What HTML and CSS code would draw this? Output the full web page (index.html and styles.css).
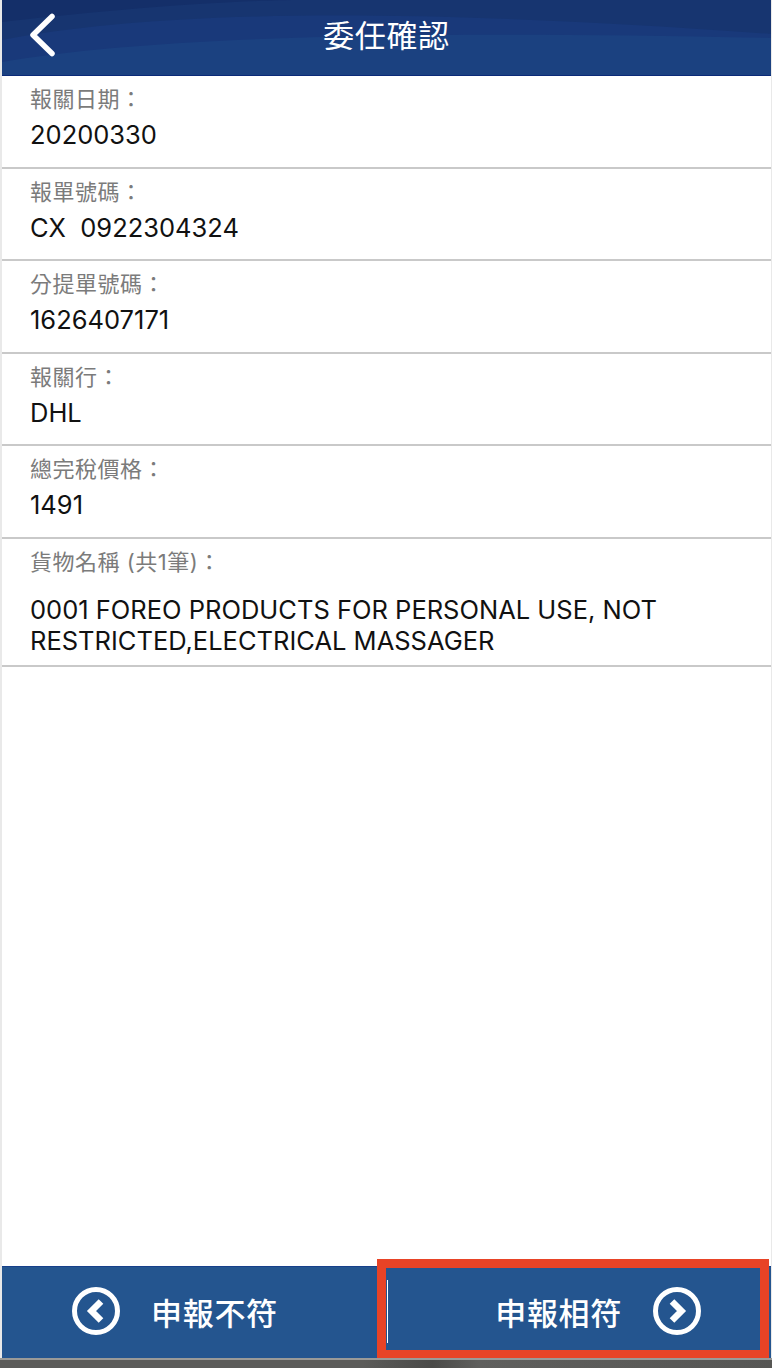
FILE: index.html
```html
<!DOCTYPE html>
<html lang="zh-Hant">
<head>
    <meta charset="UTF-8">
    <meta name="viewport" content="width=device-width, initial-scale=1.0">
    <title>委任確認</title>
    <link rel="stylesheet" href="styles.css">
</head>
<body>
    <div class="screen">
        <header class="topbar">
            <svg class="topbar-bg" viewBox="0 0 770 75" preserveAspectRatio="none" aria-hidden="true">
                <path d="M0 0H770V75H0Z" fill="#1b4180"/>
                <path d="M0 62C150 36 420 30 770 38V0H0Z" fill="#19397a"/>
                <path d="M0 40C140 14 360 4 770 34V0H0Z" fill="#173570"/>
                <path d="M0 22C120 8 240 0 300 0H0Z" fill="#142f69"/>
            </svg>
            <a class="back" href="#">
                <svg width="30" height="46" viewBox="0 0 30 46" aria-hidden="true">
                    <path d="M27 4.500L8 23L27 41.500" fill="none" stroke="#fff" stroke-width="5.500" stroke-linecap="round" stroke-linejoin="round"/>
                </svg>
            </a>
            <h1 class="title">委任確認</h1>
        </header>

        <main class="list">
            <section class="row">
                <div class="label">報關日期：</div>
                <div class="value">20200330</div>
            </section>
            <section class="row">
                <div class="label">報單號碼：</div>
                <div class="value">CX&nbsp;&nbsp;0922304324</div>
            </section>
            <section class="row">
                <div class="label">分提單號碼：</div>
                <div class="value">1626407171</div>
            </section>
            <section class="row">
                <div class="label">報關行：</div>
                <div class="value">DHL</div>
            </section>
            <section class="row">
                <div class="label">總完稅價格：</div>
                <div class="value">1491</div>
            </section>
            <section class="row row-goods">
                <div class="label">貨物名稱 (共1筆)：</div>
                <div class="value">0001 FOREO PRODUCTS FOR PERSONAL USE, NOT RESTRICTED,ELECTRICAL MASSAGER</div>
            </section>
        </main>

        <footer class="actions">
            <a class="action" href="#">
                <svg class="action-icon" viewBox="0 0 48 48" aria-hidden="true">
                    <circle cx="24" cy="24" r="21.500" fill="none" stroke="#fff" stroke-width="5"/>
                    <path d="M29 14.500L19.500 24L29 33.500" fill="none" stroke="#fff" stroke-width="6.500"/>
                </svg>
                <span>申報不符</span>
            </a>
            <a class="action action-next" href="#">
                <span>申報相符</span>
                <svg class="action-icon" viewBox="0 0 48 48" aria-hidden="true">
                    <circle cx="24" cy="24" r="21.500" fill="none" stroke="#fff" stroke-width="5"/>
                    <path d="M19 14.500L28.500 24L19 33.500" fill="none" stroke="#fff" stroke-width="6.500"/>
                </svg>
            </a>
            <div class="highlight"></div>
        </footer>
        <div class="desktop-strip"></div>
    </div>
</body>
</html>
```

FILE: styles.css
```css
html, body {
    margin: 0;
    height: 100%;
    background-color: #fff;
}
body {
    font-family: Inter, "Noto Sans CJK TC", sans-serif;
    overflow: hidden;
}
.screen {
    height: 1368px;
    display: flex;
    flex-direction: column;
    box-sizing: border-box;
    padding-left: 2px;
    padding-right: 1px;
    background-color: #e9e9e9;
}
.topbar {
    position: relative;
    height: 76px;
    box-sizing: border-box;
    flex: none;
    display: flex;
    align-items: center;
    justify-content: center;
    border-bottom: 1px solid #0b2a78;
}
.topbar-bg {
    position: absolute;
    inset: 0;
    width: 100%;
    height: 100%;
}
.back {
    position: absolute;
    left: 23px;
    top: 12px;
    line-height: 0;
}
.title {
    position: relative;
    top: -4px;
    margin: 0;
    font-size: 31px;
    font-weight: normal;
    letter-spacing: 0.7px;
    color: #fff;
    font-family: "Noto Sans CJK TC", sans-serif;
    line-height: 1;
}
.list {
    flex: 1;
    background-color: #fff;
}
.row {
    height: 92.6px;
    box-sizing: border-box;
    padding: 8px 28px 0;
    border-bottom: 2px solid #c9c9c9;
}
.row-goods {
    height: 128px;
}
.label {
    font-family: Inter, "Noto Sans CJK TC", sans-serif;
    font-size: 22px;
    line-height: 30px;
    letter-spacing: 0.5px;
    color: #7b7b7b;
}
.value {
    margin-top: 5px;
    font-size: 25.5px;
    line-height: 31px;
    color: #111;
}
.row-goods .value {
    margin-top: 17px;
}
.actions {
    position: relative;
    height: 92px;
    box-sizing: border-box;
    flex: none;
    display: flex;
    background-color: #24558f;
    border-top: 1px solid #17408a;
}
.action {
    flex: 1;
    display: flex;
    align-items: center;
    gap: 31px;
    padding-left: 70px;
    padding-bottom: 3px;
    color: #fff;
    text-decoration: none;
    font-family: "Noto Sans CJK TC", sans-serif;
    font-size: 31px;
    font-weight: 500;
    letter-spacing: 0.7px;
}
.action-next {
    position: relative;
    justify-content: flex-end;
    padding-left: 0;
    padding-right: 70px;
}
/* thin white divider, only the part inside the red frame shows */
.action-next::before {
    content: "";
    position: absolute;
    left: 0;
    top: 13px;
    height: 63px;
    width: 1px;
    background-color: #fff;
}
.action-icon {
    width: 48px;
    height: 48px;
}
.highlight {
    position: absolute;
    left: 375px;
    right: 2px;
    top: -8px;
    bottom: 0;
    border: 9px solid #e84326;
    border-bottom-width: 8px;
    pointer-events: none;
}
.desktop-strip {
    height: 10px;
    flex: none;
    margin: 0 -1px 0 -2px;
    background: linear-gradient(90deg, #5c5c5a 0%, #5c5c5a 47%, #4a4a48 56%, #5f5f5d 62%, #565654 100%);
    border-top: 2px solid #9a9a98;
    box-sizing: border-box;
}
```
